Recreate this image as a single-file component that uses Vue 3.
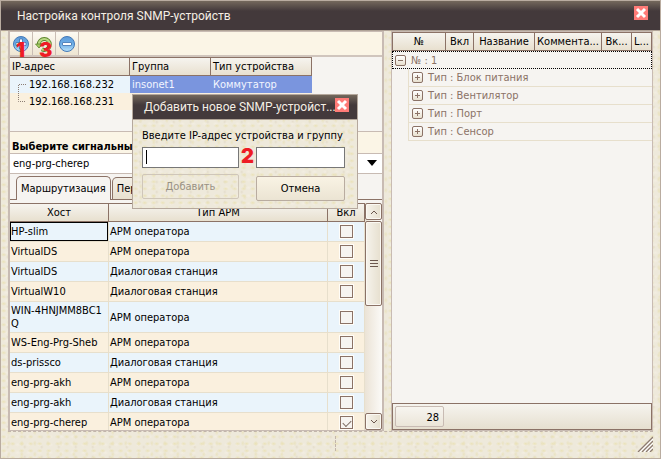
<script setup>
import { ref } from 'vue'

const devices = ref([
  { ip: '192.168.168.232', group: 'insonet1', type: 'Коммутатор' },
  { ip: '192.168.168.231', group: '', type: '' },
])
const hosts = ref([
  { name: 'HP-slim', type: 'АРМ оператора', on: false },
  { name: 'VirtualDS', type: 'АРМ оператора', on: false },
  { name: 'VirtualDS', type: 'Диалоговая станция', on: false },
  { name: 'VirtualW10', type: 'Диалоговая станция', on: false },
  { name: 'WIN-4HNJMM8BC1Q', type: 'АРМ оператора', on: false, tall: true },
  { name: 'WS-Eng-Prg-Sheb', type: 'АРМ оператора', on: false },
  { name: 'ds-prissco', type: 'Диалоговая станция', on: false },
  { name: 'eng-prg-akh', type: 'АРМ оператора', on: false },
  { name: 'eng-prg-akh', type: 'Диалоговая станция', on: false },
  { name: 'eng-prg-cherep', type: 'АРМ оператора', on: true },
])
const sensorColumns = ['№', 'Вкл', 'Название', 'Коммента...', 'Вк...', 'L...']
const groups = ['Блок питания', 'Вентилятор', 'Порт', 'Сенсор']
const server = ref('eng-prg-cherep')
const address = ref('')
const group = ref('')
</script>

<template>
  <main class="window textured">
    <header class="titlebar">
      <h1>Настройка контроля SNMP-устройств</h1>
      <button class="close" aria-label="Закрыть">
        <svg viewBox="0 0 14 14"><path d="M3 3 11 11M11 3 3 11" /></svg>
      </button>
    </header>

    <div class="content">
      <section class="panel left">
        <div class="toolbar">
          <button class="tool" aria-label="Добавить устройство">
            <svg viewBox="0 0 18 18">
              <defs>
                <linearGradient id="blue" x1="0" y1="0" x2="0" y2="1">
                  <stop offset="0" stop-color="#5d9ad8" />
                  <stop offset=".5" stop-color="#6fb0e8" />
                  <stop offset="1" stop-color="#b9e2fa" />
                </linearGradient>
              </defs>
              <circle cx="9" cy="9" r="7.500" fill="url(#blue)" stroke="#4379b8" />
              <path d="M7.500 4h3v3.500h3.500v3h-3.500v3.500h-3v-3.500h-3.500v-3h3.500z" fill="#fff" stroke="#3c70ad" stroke-width=".8" />
            </svg>
            <span class="mark">1</span>
          </button>
          <button class="tool" aria-label="Обновить">
            <svg viewBox="0 0 18 18">
              <path d="M3.800 9.500a5.500 5.500 0 1 1 11 0 5.500 5.500 0 0 1-8 4.800" fill="none" stroke="#5b842b" stroke-width="4" />
              <path d="M3.800 9.500a5.500 5.500 0 1 1 11 0 5.500 5.500 0 0 1-8 4.800" fill="none" stroke="#b9d982" stroke-width="2.200" />
              <path d="M.5 9h7l-3.500 4z" fill="#a5cc63" stroke="#5b842b" stroke-width=".8" />
            </svg>
            <span class="mark">3</span>
          </button>
          <button class="tool" aria-label="Удалить">
            <svg viewBox="0 0 18 18">
              <circle cx="9" cy="9" r="7.500" fill="url(#blue)" stroke="#4379b8" />
              <rect x="4.500" y="7.500" width="9" height="3" rx=".5" fill="#fff" stroke="#3c70ad" stroke-width=".8" />
            </svg>
          </button>
        </div>

        <div class="devices">
          <table>
            <colgroup><col class="c-ip"><col class="c-group"><col class="c-type"></colgroup>
            <thead>
              <tr><th>IP-адрес</th><th>Группа</th><th>Тип устройства</th></tr>
            </thead>
            <tbody>
              <tr v-for="(d, i) in devices" :key="d.ip" :class="{ selected: i === 0 }">
                <td>
                  <span class="branch">
                    <svg viewBox="0 0 19 17">
                      <path :d="i === 0 ? 'M16 8.500H8.500V17' : 'M8.500 0V8.500H16'" />
                    </svg>{{ d.ip }}
                  </span>
                </td>
                <td>{{ d.group }}</td>
                <td>{{ d.type }}</td>
              </tr>
            </tbody>
          </table>
        </div>

        <label class="server-label" for="server">Выберите сигнальный сервер</label>
        <div class="combo">
          <select id="server" v-model="server"><option>eng-prg-cherep</option></select>
          <svg viewBox="0 0 10 6"><path d="M0 0h10L5 6z" /></svg>
        </div>

        <div class="tabs" role="tablist">
          <button class="tab active" role="tab" aria-selected="true">Маршрутизация</button>
          <button class="tab" role="tab" aria-selected="false">Передача</button>
        </div>

        <div class="routing">
          <div class="rows">
            <table class="hosts">
              <colgroup><col class="h-name"><col><col class="h-on"></colgroup>
              <thead>
                <tr><th>Хост</th><th>Тип АРМ</th><th>Вкл</th></tr>
              </thead>
              <tbody>
                <tr v-for="(h, i) in hosts" :key="i" :class="{ tall: h.tall, current: i === 0 }">
                  <td>{{ h.name }}</td>
                  <td>{{ h.type }}</td>
                  <td class="check"><input v-model="h.on" type="checkbox" :aria-label="h.name"></td>
                </tr>
              </tbody>
            </table>
          </div>
          <div class="scroll">
            <button aria-label="Вверх"><svg viewBox="0 0 10 10"><path d="M2 7 5 4 8 7" /></svg></button>
            <div class="thumb"><svg viewBox="0 0 8 7"><path d="M0 .5h8M0 3.500h8M0 6.500h8" /></svg></div>
            <div class="track"></div>
            <button aria-label="Вниз"><svg viewBox="0 0 10 10"><path d="M2 3 5 6 8 3" /></svg></button>
          </div>
        </div>
      </section>

      <section class="panel right">
        <table class="sensors">
          <colgroup><col class="s1"><col class="s2"><col class="s3"><col class="s4"><col class="s5"><col></colgroup>
          <thead>
            <tr><th v-for="c in sensorColumns" :key="c">{{ c }}</th></tr>
          </thead>
          <tbody>
            <tr class="root">
              <td colspan="6">
                <div class="node">
                  <button class="toggle" aria-label="Свернуть"><svg viewBox="0 0 11 11"><path d="M3 5.500h5" /></svg></button>№ : 1
                </div>
              </td>
            </tr>
            <tr v-for="g in groups" :key="g" class="sub">
              <td colspan="6">
                <div class="node">
                  <button class="toggle" aria-label="Развернуть"><svg viewBox="0 0 11 11"><path d="M3 5.500h5M5.500 3v5" /></svg></button>Тип : {{ g }}
                </div>
              </td>
            </tr>
          </tbody>
        </table>
        <div class="summary"><output>28</output></div>
      </section>
    </div>

    <footer class="status">
      <span class="divider"></span>
      <svg class="grip" viewBox="0 0 16 16">
        <path d="M3 16 16 3M7 16 16 7M11 16 16 11" stroke="#fff" stroke-width="1.500" />
        <path d="M1 16 16 1M5 16 16 5M9 16 16 9M13 16 16 13" stroke="#8d7b70" stroke-width="1.300" />
      </svg>
    </footer>

    <form class="dialog textured" role="dialog" aria-labelledby="dialog-title" @submit.prevent>
      <header class="dialog-title">
        <h2 id="dialog-title">Добавить новое SNMP-устройст...</h2>
        <button type="button" class="close" aria-label="Закрыть">
          <svg viewBox="0 0 14 14"><path d="M3 3 11 11M11 3 3 11" /></svg>
        </button>
      </header>
      <div class="form">
        <label for="address">Введите IP-адрес устройства и группу</label>
        <div class="fields">
          <span class="field">
            <input id="address" v-model="address" type="text">
            <i class="caret"></i>
          </span>
          <span class="mark">2</span>
          <input v-model="group" type="text" aria-label="Группа">
        </div>
        <div class="actions">
          <button type="submit" disabled>Добавить</button>
          <button type="button">Отмена</button>
        </div>
      </div>
    </form>
  </main>
</template>

<style>
body {
  background: #eee8d8;
}
</style>

<style scoped>
* {
  box-sizing: border-box;
}
.window {
  position: relative;
  display: flex;
  flex-direction: column;
  height: 100vh;
  overflow: hidden;
  border: 1px solid #b9aca0;
  border-top: 0;
  color: #000;
  font: 11px/13px "DejaVu Sans Condensed", "DejaVu Sans", sans-serif;
}
.textured {
  background-color: #eee9db;
  background-image:
    radial-gradient(ellipse 3px 2px at 30% 40%, #eae2b8, transparent),
    radial-gradient(ellipse 2px 3px at 60% 30%, #e9e2c0, transparent),
    radial-gradient(ellipse 3px 2px at 50% 60%, #f3eee2, transparent),
    radial-gradient(ellipse 2px 2px at 40% 70%, #e4dccb, transparent);
  background-size: 9px 7px, 13px 11px, 11px 8px, 17px 10px;
}
button, input, select {
  margin: 0;
  padding: 0;
  border-radius: 0;
  color: inherit;
  font: inherit;
}
h1, h2 {
  margin: 0;
  flex: 1;
  min-width: 0;
  font: 12px/16px Roboto, "Open Sans", sans-serif;
  color: #f5efe4;
  white-space: nowrap;
}
.titlebar, .dialog-title {
  display: flex;
  align-items: center;
  background: linear-gradient(#74685c, #43393b 10px, #43393b);
}
.titlebar {
  flex: none;
  height: 31px;
  padding: 0 12px 0 16px;
  border-top: 1px solid #b9aca0;
  border-bottom: 1px solid #b0a397;
}
.close {
  flex: none;
  width: 14px;
  height: 14px;
  margin-bottom: 5px;
  border: 0;
  background: #ff7b77;
}
.close svg {
  display: block;
  fill: none;
  stroke: #fff;
  stroke-width: 3;
}
.content {
  flex: 1;
  min-height: 0;
  display: grid;
  grid-template-columns: 376fr 262fr;
  grid-template-rows: minmax(0, 1fr);
  gap: 7px;
  padding: 0 7px;
}
.panel {
  display: flex;
  flex-direction: column;
  min-width: 0;
  border: 1px solid #c8bbb3;
  background: #f6f4f1;
}
.left {
  border-width: 2px;
  border-top-width: 1px;
  border-bottom-width: 1px;
}
.toolbar {
  flex: none;
  display: flex;
  height: 25px;
  border-bottom: 2px solid #d0c5bd;
  background: #fbf5e6;
}
.tool {
  position: relative;
  display: grid;
  place-items: center;
  width: 23px;
  border: 0;
  border-right: 1px solid #c9bdb4;
  background: linear-gradient(#fdfaf2, #eee5d2);
}
.tool svg {
  width: 18px;
  height: 18px;
}
.mark {
  color: #ee1c25;
  font: 900 20px/20px Inter, sans-serif;
}
.tool .mark {
  position: absolute;
  left: 6px;
  top: 8px;
}
table {
  width: 100%;
  table-layout: fixed;
  border-collapse: separate;
  border-spacing: 0;
}
th {
  height: 19px;
  padding: 0 2px;
  border: 1px solid #8b7266;
  border-left-width: 0;
  background: linear-gradient(#f6f4ef, #e8e0cf);
  font-weight: 400;
  white-space: nowrap;
  overflow: hidden;
}
td {
  padding: 0 2px;
}
.devices {
  flex: none;
  height: 75px;
  border-bottom: 1px solid #c8bbb3;
}
.devices table {
  width: 302px;
}
.devices th {
  text-align: left;
}
.c-ip { width: 120px; }
.c-group { width: 81px; }
.devices td {
  height: 17px;
  padding: 0 2px;
  background: #faf0de;
}
.devices td:first-child {
  padding: 0;
}
.devices .selected td {
  background: #7a95de;
  color: #f3f5ff;
}
.devices .selected td:first-child {
  background: #eaf4fb;
  color: #000;
}
.branch {
  display: flex;
  align-items: center;
  height: 17px;
}
.branch svg {
  width: 19px;
  height: 17px;
  fill: none;
  stroke: #8b7d74;
  stroke-dasharray: 1 1;
}
.server-label {
  flex: none;
  height: 21px;
  padding: 8px 2px 0;
  background: #fbf5e6;
  font-weight: 700;
}
.combo {
  flex: none;
  position: relative;
  height: 21px;
  border-top: 1px solid #c8bbb3;
  border-bottom: 1px solid #c8bbb3;
  background: #fff;
}
.combo select {
  display: block;
  width: 100%;
  height: 19px;
  padding: 0 3px;
  border: 0;
  background: transparent;
  appearance: none;
}
.combo svg {
  position: absolute;
  right: 5px;
  top: 6px;
  width: 10px;
  height: 6px;
  pointer-events: none;
}
.tabs {
  flex: none;
  display: flex;
  align-items: flex-end;
  gap: 1px;
  height: 26px;
  padding-left: 6px;
  border-bottom: 1px solid #8b7266;
}
.tab {
  height: 22px;
  padding: 0 4px;
  border: 1px solid #8b7266;
  border-bottom: 0;
  border-radius: 5px 5px 0 0;
  background: linear-gradient(#f3efe7, #e8e0cf);
}
.tab.active {
  height: 24px;
  margin-bottom: -1px;
  background: #f6f4f1;
}
.routing {
  flex: 1;
  display: flex;
  min-height: 0;
  padding-top: 3px;
}
.rows {
  flex: 1;
  overflow: hidden;
}
.h-name { width: 99px; }
.h-on { width: 37px; }
.hosts td {
  height: 20px;
  padding: 0 2px 0 1px;
  border-right: 1px solid #e7dfcc;
  border-bottom: 1px solid #e7dfcc;
  word-break: break-all;
}
.hosts td:nth-child(2) {
  word-break: normal;
}
.hosts tr:nth-child(odd) td { background: #eaf4fb; }
.hosts tr:nth-child(even) td { background: #faf0de; }
.hosts .tall td { height: 31px; }
.hosts .current td:first-child {
  box-shadow: inset 0 0 0 1px #000;
}
.hosts .check {
  padding: 0;
  text-align: center;
}
.check input {
  display: block;
  width: 13px;
  height: 13px;
  margin: 0 auto;
  border: 1px solid #8b7266;
  outline: 1px solid #fffdf8;
  background: #f6f4f1;
  appearance: none;
}
.check input:checked::before {
  content: "";
  display: block;
  width: 7px;
  height: 4px;
  margin: 3px 0 0 2px;
  border: solid #7b6b62;
  border-width: 0 0 1px 1px;
  transform: rotate(-45deg);
}
.scroll {
  flex: none;
  display: flex;
  flex-direction: column;
  width: 17px;
  background: linear-gradient(90deg, #ebe3d6, #fbfaf7);
}
.scroll button, .thumb {
  display: grid;
  place-items: center;
  height: 17px;
  border: 1px solid #8b7266;
  border-radius: 2px;
  background: linear-gradient(90deg, #f6f3ec, #e6dfce);
  box-shadow: inset 0 0 0 1px #fbf9f3;
}
.scroll svg {
  width: 10px;
  height: 10px;
  fill: none;
  stroke: #6b574d;
}
.thumb {
  flex: none;
  height: 85px;
  margin-top: 1px;
}
.scroll .thumb svg {
  width: 8px;
  height: 7px;
}
.track {
  flex: 1;
}
.right {
  justify-content: space-between;
}
.sensors .s1 { width: 54px; }
.sensors .s2 { width: 28px; }
.sensors .s3 { width: 61px; }
.sensors .s4 { width: 67px; }
.sensors .s5 { width: 30px; }
.sensors th {
  padding: 0 1px;
  text-overflow: clip;
}
.sensors th:first-child {
  border-left-width: 1px;
}
.sensors td {
  padding: 0;
  color: #8b7266;
}
.node {
  display: flex;
  align-items: center;
  gap: 5px;
  height: 18px;
  padding-left: 3px;
}
.root .node {
  border: 1px dotted #000;
  padding-left: 2px;
}
.sub .node {
  margin-left: 16px;
  border-left: 1px solid #e7dfcc;
  border-bottom: 1px solid #e7dfcc;
}
.toggle {
  width: 11px;
  height: 11px;
  border: 1px solid #8b7266;
  border-radius: 2px;
  background: linear-gradient(#fff, #e8e0cf);
}
.toggle svg {
  display: block;
  width: 11px;
  height: 11px;
  margin: -1px;
  stroke: #8b7266;
}
.summary {
  display: flex;
  height: 27px;
  padding: 2px;
  border: 1px solid #8b7266;
  background: linear-gradient(#f6f4ef, #e6dfcf);
}
.summary output {
  width: 49px;
  padding: 4px 4px 0;
  border: 1px solid #c8bbb3;
  border-radius: 2px;
  background: linear-gradient(#f7f5f0, #ebe5d8);
  text-align: right;
}
.status {
  flex: none;
  display: flex;
  justify-content: space-between;
  height: 27px;
  margin: 0 7px;
  border-top: 1px dashed #c2b5ab;
}
.divider {
  width: 328px;
  height: 15px;
  margin-top: 4px;
  border-right: 1px dashed #c2b5ab;
}
.grip {
  width: 16px;
  height: 16px;
  margin-top: 4px;
}
.dialog {
  position: absolute;
  left: 131px;
  top: 94px;
  width: 226px;
  border: 1px solid #b5a89d;
}
.dialog-title {
  height: 25px;
  padding: 0 8px 0 11px;
  border-bottom: 1px solid #b0a397;
}
.form {
  display: flex;
  flex-direction: column;
  padding: 9px 12px 7px 9px;
}
.form label {
  height: 18px;
}
.fields {
  display: grid;
  grid-template-columns: 97px 1fr 89px;
}
.fields .mark {
  justify-self: center;
  line-height: 18px;
}
.field {
  position: relative;
}
.caret {
  position: absolute;
  left: 4px;
  top: 3px;
  width: 1px;
  height: 14px;
  background: #000;
}
.fields input {
  display: block;
  width: 100%;
  height: 21px;
  padding: 0 3px;
  border: 1px solid #777;
  background: #fff;
}
.actions {
  display: flex;
  justify-content: space-between;
  align-items: flex-end;
  height: 33px;
}
.actions button {
  width: 89px;
  height: 25px;
  border: 1px solid #b9aca0;
  border-radius: 2px;
  background: linear-gradient(#f9f3e4, #ebe4d3);
}
.actions button:disabled {
  align-self: flex-start;
  width: 97px;
  margin-top: 6px;
  border-color: #cfc6b9;
  background: transparent;
  color: #999184;
}
</style>
